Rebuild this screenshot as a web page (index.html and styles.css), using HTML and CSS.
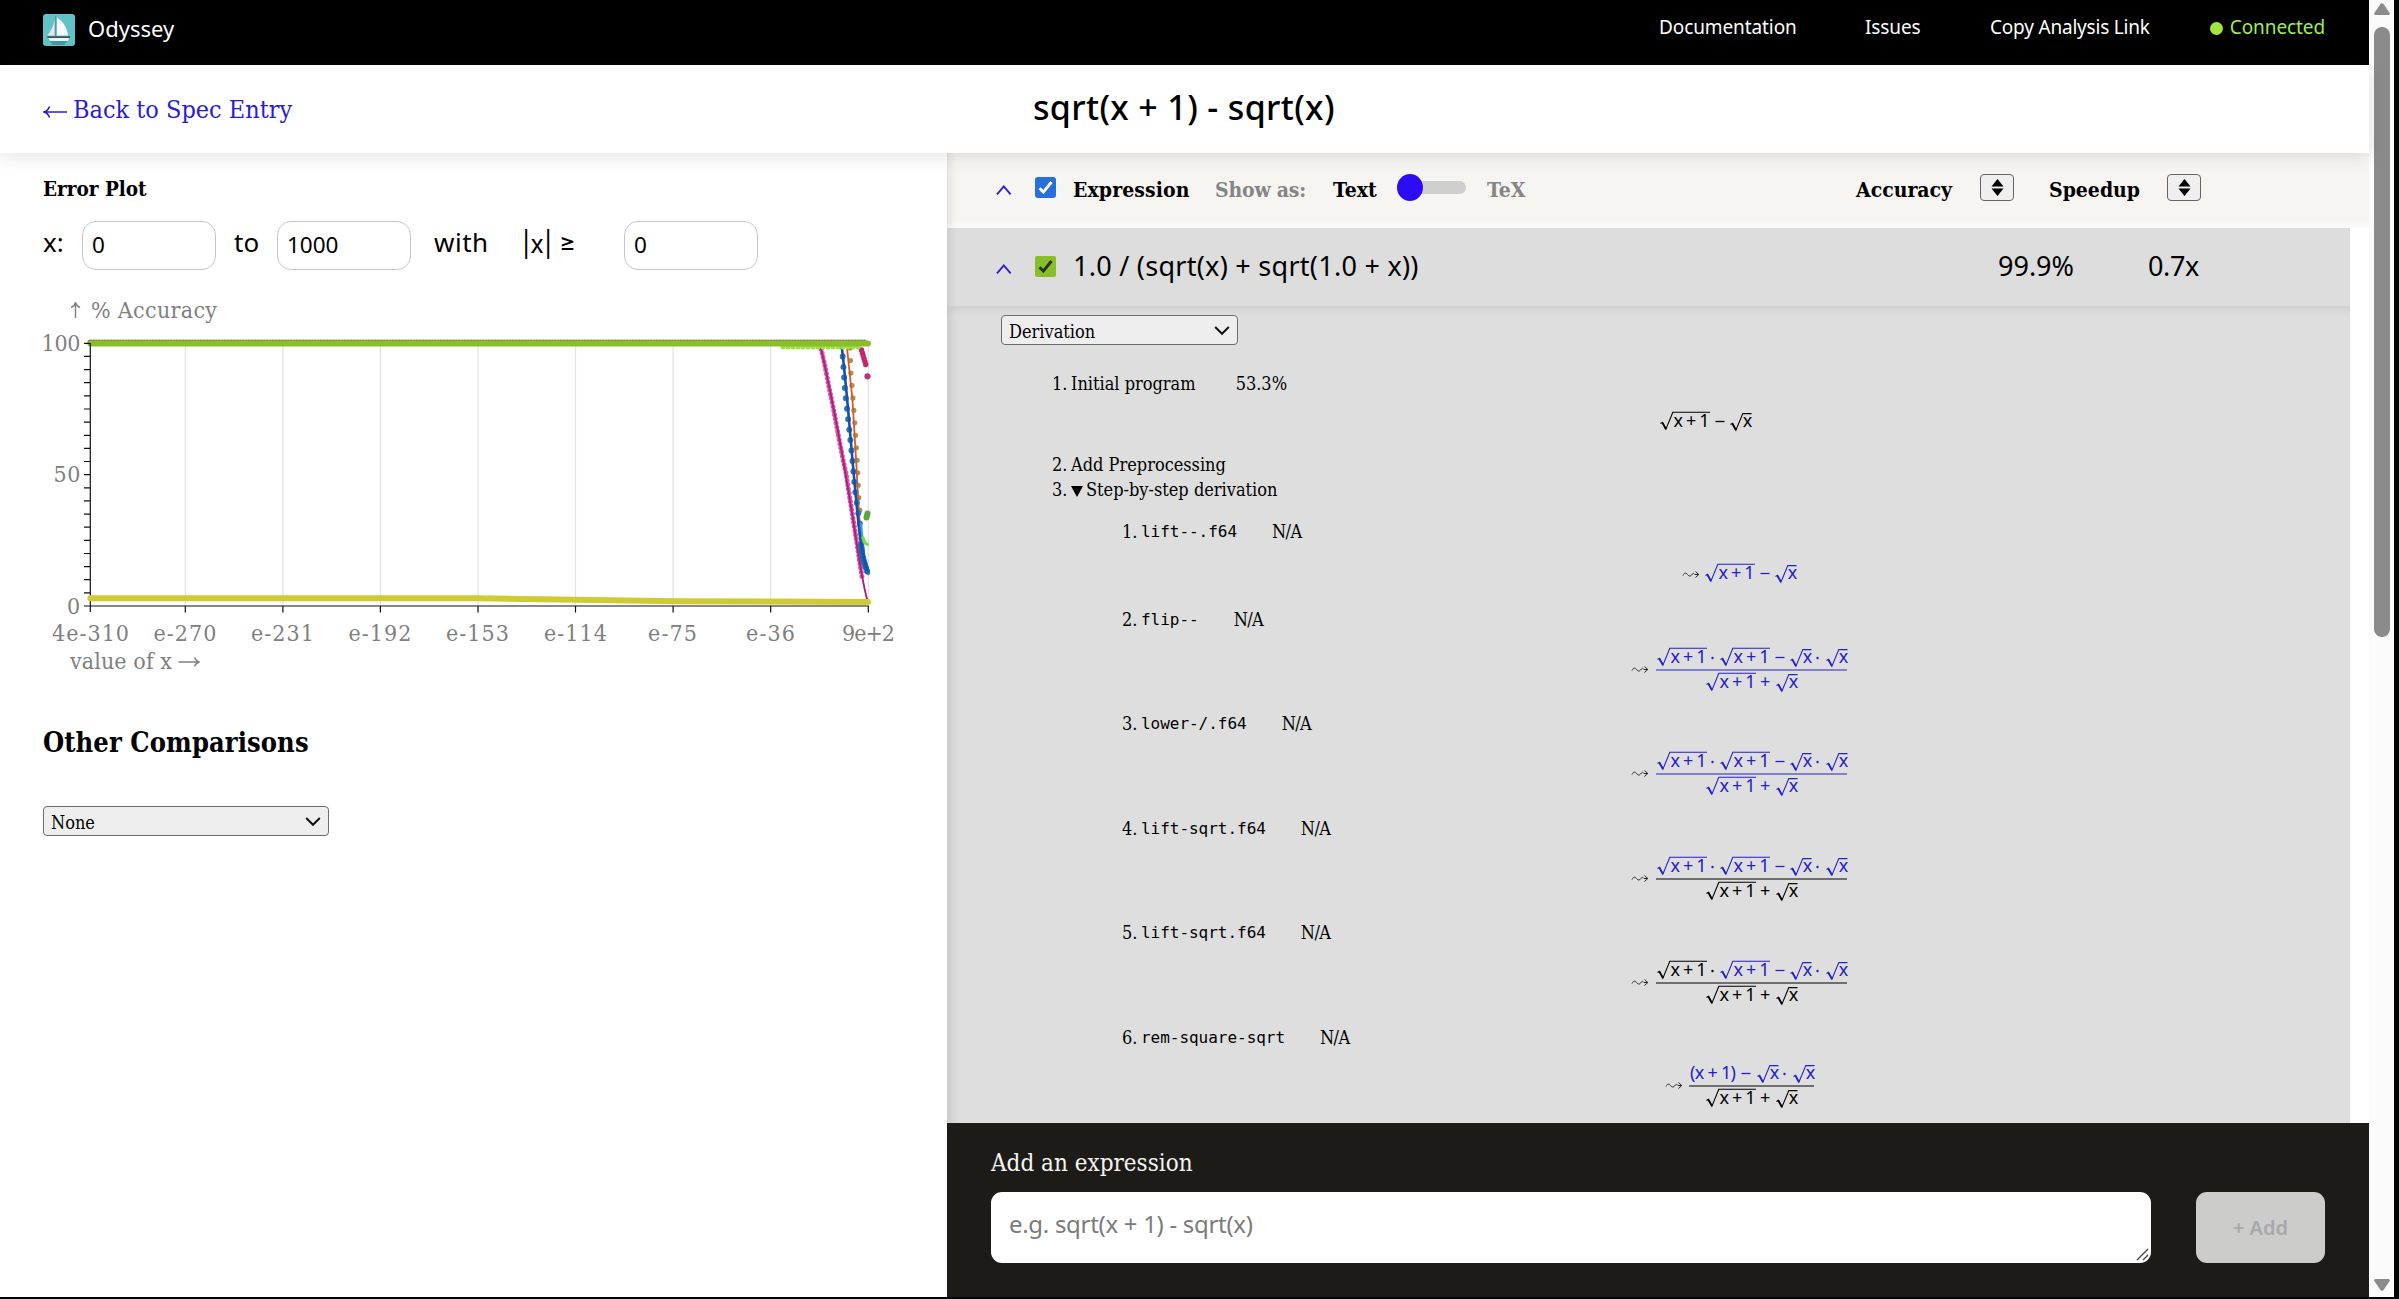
FILE: index.html
```html
<!DOCTYPE html>
<html lang="en">
<head>
<meta charset="utf-8">
<title>Odyssey</title>
<link rel="stylesheet" href="styles.css">
</head>
<body>
<svg class="defs" aria-hidden="true">
  <defs>
    <g id="root-sum">
      <path d="M.5 12.500l2-1.300 3.400 7L12.800 1.300H50" fill="none" stroke="currentColor" stroke-width="1.100"/>
      <path d="M2.300 11.500l3.600 6.500" fill="none" stroke="currentColor" stroke-width="1.800"/>
      <text x="13.500" y="16" textLength="36">x + 1</text>
    </g>
    <g id="root-x">
      <path d="M.5 13.500l2-1.300 3.400 7L12.800 2.600H21.500" fill="none" stroke="currentColor" stroke-width="1.100"/>
      <path d="M2.300 12.500l3.600 6.500" fill="none" stroke="currentColor" stroke-width="1.800"/>
      <text x="12.700" y="16">x</text>
    </g>
    <g id="leads">
      <path d="M0 6.500c1.500-3 3-3 4.500-1s3 2 4.500 0 2-1 3 0H15.500M12.500 2.500l3.300 3-3.300 3" fill="none" stroke="#222" stroke-width="1"/>
    </g>
    <g id="sum-of-roots">
      <use href="#root-sum"/>
      <text x="54" y="16">+</text>
      <use href="#root-x" x="70"/>
    </g>
    <g id="difference">
      <use href="#root-sum"/>
      <path d="M55.500 10.500h9" stroke="currentColor" stroke-width="1.300"/>
      <use href="#root-x" x="70"/>
    </g>
    <g id="product-tail">
      <use href="#root-sum"/>
      <path d="M55.500 10.500h9" stroke="currentColor" stroke-width="1.300"/>
      <use href="#root-x" x="70"/>
      <circle cx="97.500" cy="11" r="1.200" fill="currentColor"/>
      <use href="#root-x" x="106"/>
    </g>
  </defs>
</svg>
<div class="app">
  <header class="topbar">
    <svg class="logo" width="32" height="32" viewBox="0 0 32 32">
      <rect width="32" height="32" rx="3" fill="#62c3c6"/>
      <path d="M5 25h21l-5 6H10z" fill="#3d9aa5"/>
      <path d="M11.500 6v15.500H4.500C8 17 10.500 12 11.500 6z" fill="#e4e8ec"/>
      <path d="M14 3.500c6 4 10 10 11 18H14z" fill="#f8f9fa"/>
      <path d="M12.500 2v20" stroke="#7b8a90" stroke-width="1"/>
      <path d="M4 22.500h23l-2 4.500H7z" fill="#f3f1ee"/>
      <path d="M4 22.300h23v1.700H4.500z" fill="#384e5c"/>
    </svg>
    <span class="brand">Odyssey</span>
    <nav class="nav">
      <a class="nav-docs">Documentation</a>
      <a class="nav-issues">Issues</a>
      <a class="nav-copy">Copy Analysis Link</a>
      <span class="status"><i class="dot"></i><span>Connected</span></span>
    </nav>
  </header>
  <div class="titlebar">
    <a class="back"><svg width="26" height="14" viewBox="0 0 26 14"><path d="M1 7h23M6.500 1.500C5.500 4.500 3.500 6.300 1 7c2.500.7 4.500 2.500 5.500 5.500" fill="none" stroke="currentColor" stroke-width="1.500"/></svg><span>Back to Spec Entry</span></a>
    <h1>sqrt(x + 1) - sqrt(x)</h1>
  </div>
  <div class="columns">
    <section class="left">
      <h2 class="plot-title">Error Plot</h2>
      <div class="range">
        <span class="lab lab-x">x:</span><span class="field">0</span>
        <span class="lab lab-to">to</span><span class="field">1000</span>
        <span class="lab lab-with">with</span><span class="lab lab-abs">|x| ≥</span><span class="field">0</span>
      </div>
      <svg class="plot" width="947" height="400" viewBox="0 290 947 400">
        <g stroke="#e4e4e4" stroke-width="1.300"><path d="M185.300 343V606M282.900 343V606M380.400 343V606M478 343V606M575.500 343V606M673.100 343V606M770.700 343V606M868.300 343V606"/></g>
        <g fill="none" stroke-linecap="round">
          <path d="M820 345C825 363 827 378 830 392C835 415 840 447 846 473C850 500 855 530 862 577" stroke="#d457b0" stroke-width="5" stroke-dasharray="0 4.200"/>
          <path d="M821 349C826 370 829 385 834 411C840 440 845 470 850 501C856 535 860 573 867 599" stroke="#a82474" stroke-width="1.900"/>
          <path d="M850 348L851 374 853.500 405 855 426 857.500 466 859 504 861 519" stroke="#a5935c" stroke-width="5.200" stroke-dasharray="0 12.500"/>
          <path d="M847 348L852.500 400 856.500 467 859 515 864 556" stroke="#d95a1e" stroke-width="1.800"/>
          <path d="M842 346L845 391 849 427 852 456 855 490 860 525" stroke="#3576ae" stroke-width="6" stroke-dasharray="0 10.500"/>
          <path d="M860 525L863 555 868 573" stroke="#3f9fca" stroke-width="4.500"/>
          <path d="M861 545L863 559 867.500 572.500" stroke="#1f66ad" stroke-width="6" stroke-dasharray="0 3"/>
          <path d="M842 349C847 390 850 435 855 488S861 550 867 570" stroke="#164fae" stroke-width="2.600"/>
          <path d="M861.500 350L866.500 367" stroke="#c32768" stroke-width="5.500" stroke-dasharray="0 3"/>
          <path d="M867.500 376.300h.01" stroke="#bd3279" stroke-width="6.200"/>
          <path d="M867.500 513.500L866.500 517.500" stroke="#5ba53e" stroke-width="6"/>
          <path d="M863 538L865 543 867.500 544.500" stroke="#70df45" stroke-width="3.200"/>
          <path d="M90.300 342.300H867" stroke="#85764d" stroke-width="5.500" stroke-dasharray="0 3"/>
          <path d="M783 347H862" stroke="#a1e042" stroke-width="5" stroke-dasharray="0 5"/>
          <path d="M90.300 343.600H868" stroke="#8abf2c" stroke-width="6"/>
        </g>
        <g stroke="#111" stroke-width="1.200" fill="none">
          <path d="M90.300 343V612M84 606H868.500"/>
          <path d="M84 343.300h6M84 356.400h6M84 369.600h6M84 382.700h6M84 395.800h6M84 409h6M84 422.100h6M84 435.300h6M84 448.400h6M84 461.500h6M84 474.700h6M84 487.800h6M84 500.900h6M84 514.100h6M84 527.200h6M84 540.300h6M84 553.500h6M84 566.600h6M84 579.700h6M84 592.900h6"/>
          <path d="M185.300 606v6.500M282.900 606v6.500M380.400 606v6.500M478 606v6.500M575.500 606v6.500M673.100 606v6.500M770.700 606v6.500M868.300 606v6.500"/>
        </g>
        <path d="M90.300 598.200H478L680 601.300 868 602" fill="none" stroke="#cfcb35" stroke-width="6" stroke-linecap="round"/>
        <g class="axis">
          <path d="M75.500 318V303M71 307.500C73.500 306.500 75 305 75.500 302.500C76 305 77.500 306.500 80 307.500" fill="none" stroke="#808080" stroke-width="1.400"/>
          <text x="91" y="318" textLength="126">% Accuracy</text>
          <text x="41.500" y="351" textLength="39">100</text>
          <text x="53.500" y="482" textLength="27">50</text>
          <text x="67" y="613.500">0</text>
          <g>
            <text x="52" y="641" textLength="77">4e-310</text>
            <text x="153.500" y="641" textLength="63">e-270</text>
            <text x="251" y="641" textLength="63">e-231</text>
            <text x="348.500" y="641" textLength="63">e-192</text>
            <text x="446" y="641" textLength="63">e-153</text>
            <text x="544" y="641" textLength="63">e-114</text>
            <text x="648" y="641" textLength="49">e-75</text>
            <text x="746" y="641" textLength="49">e-36</text>
            <text x="842" y="641" textLength="53">9e+2</text>
          </g>
          <text x="70" y="668.500" textLength="102">value of x</text>
          <path d="M178.500 662H199M194.500 657.500C195.500 660 197 661.500 199.500 662C197 662.500 195.500 664 194.500 666.500" fill="none" stroke="#808080" stroke-width="1.300"/>
        </g>
      </svg>
      <h2 class="other">Other Comparisons</h2>
      <div class="select select-none"><span>None</span><svg width="16" height="9" viewBox="0 0 16 9"><path d="M1.200 1l6.800 6.800L14.800 1" fill="none" stroke="#111" stroke-width="2"/></svg></div>
    </section>
    <section class="right">
      <div class="listhead">
        <svg class="caret" width="16" height="10" viewBox="0 0 16 10"><path d="M1 9.300L7.800 1.500l6.800 7.800" fill="none" stroke="#2f1fd0" stroke-width="1.900"/></svg>
        <svg class="check" width="21" height="21" viewBox="0 0 21 21"><rect width="21" height="21" rx="3" fill="#266fdd"/><path d="M4.500 11.300l3.800 3.800L16.500 5" fill="none" stroke="#fff" stroke-width="2.900"/></svg>
        <b class="h-expr">Expression</b>
        <b class="h-show">Show as:</b>
        <b class="h-text">Text</b>
        <span class="toggle"><i></i></span>
        <b class="h-tex">TeX</b>
        <b class="h-acc">Accuracy</b>
        <span class="sort"><svg width="13" height="17" viewBox="0 0 13 17"><path d="M6.500 0L12.500 7.500H.5zM6.500 17L.5 9.500h12z"/></svg></span>
        <b class="h-speed">Speedup</b>
        <span class="sort"><svg width="13" height="17" viewBox="0 0 13 17"><path d="M6.500 0L12.500 7.500H.5zM6.500 17L.5 9.500h12z"/></svg></span>
      </div>
      <div class="row">
        <svg class="caret" width="16" height="10" viewBox="0 0 16 10"><path d="M1 9.300L7.800 1.500l6.800 7.800" fill="none" stroke="#2f1fd0" stroke-width="1.900"/></svg>
        <svg class="check" width="21" height="21" viewBox="0 0 21 21"><rect width="21" height="21" rx="2" fill="#89be2b"/><path d="M4.500 11.300l3.800 3.800L16.500 5" fill="none" stroke="#26331a" stroke-width="2.900"/></svg>
        <span class="expr">1.0 / (sqrt(x) + sqrt(1.0 + x))</span>
        <span class="acc">99.9%</span>
        <span class="speed">0.7x</span>
      </div>
      <div class="details">
        <div class="select select-derivation"><span>Derivation</span><svg width="16" height="9" viewBox="0 0 16 9"><path d="M1.200 1l6.800 6.800L14.800 1" fill="none" stroke="#111" stroke-width="2"/></svg></div>
        <div class="steps">
          <div class="step first">
            <div class="line"><span class="num">1.</span><span class="name">Initial program</span><span class="val">53.3%</span></div>
            <svg class="math" width="92" height="24" viewBox="0 0 92 24"><use href="#difference"/></svg>
          </div>
          <div class="line"><span class="num">2.</span><span>Add Preprocessing</span></div>
          <div class="line"><span class="num">3.</span><svg class="tri" width="12" height="11" viewBox="0 0 12 11"><path d="M0 0h12L6 11z"/></svg><span>Step-by-step derivation</span></div>
          <div class="substeps">
            <div class="step s1">
              <div class="line"><span class="num">1.</span><code>lift--.f64</code><span class="na">N/A</span></div>
              <svg class="math" width="114" height="24" viewBox="0 0 114 24"><use href="#leads" y="6"/><use href="#difference" x="22" class="blue"/></svg>
            </div>
            <div class="step">
              <div class="line"><span class="num">2.</span><code>flip--</code><span class="na">N/A</span></div>
              <svg class="math" width="216" height="46" viewBox="0 0 216 46"><use href="#leads" y="17"/><g class="blue"><use href="#root-sum" x="25"/><circle cx="80.500" cy="11" r="1.200" fill="currentColor"/><use href="#product-tail" x="88"/><path d="M24 23h191" stroke="currentColor" stroke-width="1.200"/><use href="#sum-of-roots" x="74" y="25"/></g></svg>
            </div>
            <div class="step">
              <div class="line"><span class="num">3.</span><code>lower-/.f64</code><span class="na">N/A</span></div>
              <svg class="math" width="216" height="46" viewBox="0 0 216 46"><use href="#leads" y="17"/><g class="blue"><use href="#root-sum" x="25"/><circle cx="80.500" cy="11" r="1.200" fill="currentColor"/><use href="#product-tail" x="88"/><path d="M24 23h191" stroke="currentColor" stroke-width="1.200"/><use href="#sum-of-roots" x="74" y="25"/></g></svg>
            </div>
            <div class="step">
              <div class="line"><span class="num">4.</span><code>lift-sqrt.f64</code><span class="na">N/A</span></div>
              <svg class="math" width="216" height="46" viewBox="0 0 216 46"><use href="#leads" y="17"/><g class="blue"><use href="#root-sum" x="25"/><circle cx="80.500" cy="11" r="1.200" fill="currentColor"/><use href="#product-tail" x="88"/></g><path d="M24 23h191" stroke="currentColor" stroke-width="1.200"/><use href="#sum-of-roots" x="74" y="25"/></svg>
            </div>
            <div class="step">
              <div class="line"><span class="num">5.</span><code>lift-sqrt.f64</code><span class="na">N/A</span></div>
              <svg class="math" width="216" height="46" viewBox="0 0 216 46"><use href="#leads" y="17"/><use href="#root-sum" x="25"/><circle cx="80.500" cy="11" r="1.200" fill="currentColor"/><use href="#product-tail" x="88" class="blue"/><path d="M24 23h191" stroke="currentColor" stroke-width="1.200"/><use href="#sum-of-roots" x="74" y="25"/></svg>
            </div>
            <div class="step s6">
              <div class="line"><span class="num">6.</span><code>rem-square-sqrt</code><span class="na">N/A</span></div>
              <svg class="math" width="149" height="46" viewBox="0 0 149 46"><use href="#leads" y="17"/><g class="blue"><text x="24" y="16" textLength="46">(x + 1)</text><path d="M75.500 10.500h9" stroke="currentColor" stroke-width="1.300"/><use href="#root-x" x="91"/><circle cx="118.500" cy="11" r="1.200" fill="currentColor"/><use href="#root-x" x="127"/></g><path d="M23 23h125" stroke="currentColor" stroke-width="1.200"/><use href="#sum-of-roots" x="40" y="25"/></svg>
            </div>
          </div>
        </div>
      </div>
      <footer class="adder">
        <label>Add an expression</label>
        <div class="adder-row">
          <div class="textarea"><span>e.g. sqrt(x + 1) - sqrt(x)</span><svg width="13" height="13" viewBox="0 0 13 13"><path d="M1 12L12 1M7 12l5-5" stroke="#444" stroke-width="1.400"/></svg></div>
          <div class="add">+ Add</div>
        </div>
      </footer>
    </section>
  </div>
</div>
<div class="scrollbar">
  <svg width="16" height="12" viewBox="0 0 16 12"><path d="M8 0l1.500 1L16 10.500 15 12H1L0 10.500 6.500 1z" fill="#8b8b8b"/></svg>
  <i class="thumb"></i>
  <svg width="16" height="12" viewBox="0 0 16 12"><path d="M8 12l1.500-1L16 1.500 15 0H1L0 1.500 6.500 11z" fill="#8b8b8b"/></svg>
</div>
</body>
</html>
```
FILE: styles.css
```css
* { box-sizing: border-box; }
body {
  margin: 0;
  width: 2399px;
  height: 1299px;
  overflow: hidden;
  display: flex;
  background: #000;
  color: #000;
  font-family: "DejaVu Serif Condensed", "DejaVu Serif", serif;
  white-space: nowrap;
}
svg { display: block; flex: none; }
.defs { position: absolute; width: 0; height: 0; }
.app { width: 2369px; height: 1297px; background: #fff; display: flex; flex-direction: column; }

.topbar {
  height: 65px;
  background: #000;
  color: #fff;
  font-family: "Noto Sans", sans-serif;
  display: flex;
  align-items: flex-start;
  padding-left: 43px;
  line-height: 30px;
}
.logo { margin-top: 14px; }
.brand { margin: 13px 0 0 13px; font-size: 22px; }
.nav { margin: 12px 44px 0 auto; display: flex; font-size: 19px; letter-spacing: -.1px; }
.nav-docs { width: 206px; }
.nav-issues { width: 125px; }
.nav-copy { width: 220px; letter-spacing: -.2px; }
.status { display: flex; align-items: center; gap: 7px; width: 115px; color: #9fec55; }
.dot { width: 13px; height: 13px; border-radius: 50%; background: #a2e43f; margin-top: 3px; }

.titlebar {
  height: 88px;
  background: #fff;
  display: flex;
  align-items: flex-start;
  line-height: 40px;
  padding-left: 43px;
  position: relative;
  z-index: 2;
  box-shadow: 0 4px 16px rgba(40, 40, 50, .12);
}
.back { width: 990px; height: 40px; margin-top: 25px; display: flex; align-items: center; gap: 4px; color: #2a1cd2; font-size: 25px; }
.back svg { margin-top: 3px; }
h1 { margin: 22px 0 0; font: 500 34px/40px "Noto Sans", sans-serif; letter-spacing: .35px; }

.columns { display: flex; height: 1144px; }
.left { width: 947px; }
.right { width: 1422px; display: flex; flex-direction: column; }

.plot-title { margin: 20px 0 0 43px; font-size: 20.5px; line-height: 32px; }
.range {
  margin: 16px 0 0 43px;
  height: 49px;
  display: flex;
  align-items: center;
  font-family: "Noto Sans", sans-serif;
  font-size: 26px;
}
.field {
  width: 134px;
  height: 49px;
  border: 1px solid #c6c6c6;
  border-radius: 14px;
  padding-left: 9px;
  font-size: 22.5px;
  line-height: 45px;
}
.lab { line-height: 36px; margin-top: -7px; }
.lab-x { width: 39px; }
.lab-to { width: 61px; padding-left: 18px; }
.lab-with { width: 111px; padding-left: 23px; letter-spacing: .5px; }
.lab-abs { width: 102px; font-family: Inter, sans-serif; font-size: 25px; margin-top: -3px; }
.plot { margin-top: 20px; }
.axis { fill: #808080; font-size: 23px; }
.other { margin: 33px 0 0 43px; font-size: 27px; line-height: 40px; letter-spacing: .1px; }
.select {
  height: 30px;
  display: flex;
  align-items: center;
  justify-content: space-between;
  background: #efeeee;
  border: 1px solid #6c6c6c;
  border-radius: 4px;
  padding: 0 7px;
  font-size: 18px;
}
.select-none { width: 286px; margin: 43px 0 0 43px; }
.select span { padding-top: 2px; }

.listhead {
  height: 75px;
  background: linear-gradient(#f7f5f2 68px, #fdfcfb);
  display: flex;
  padding: 20px 0 0 48px;
  font-size: 21px;
  line-height: 32px;
  box-shadow: inset 10px 0 12px -10px rgba(0, 0, 0, .15);
}
.caret { margin: 12px 23px 0 1px; }
.check { margin-top: 4px; }
.listhead .check { margin-right: 17px; }
.listhead b { margin-top: 1px; }
.h-expr { width: 142px; letter-spacing: .1px; }
.h-show { width: 118px; color: #858585; letter-spacing: -.2px; }
.h-text { width: 64px; }
.toggle { width: 69px; height: 13px; margin-top: 8px; border-radius: 7px; background: #cfcfcf; }
.toggle i { display: block; width: 26px; height: 27px; border-radius: 50%; background: #2c0cf5; margin-top: -7px; position: relative; }
.h-tex { width: 390px; padding-left: 21px; color: #858585; }
.h-acc { width: 124px; }
.sort {
  width: 34px;
  height: 27px;
  margin: 1px 0 0;
  border: 1px solid #666;
  border-radius: 4px;
  background: #efefef;
  display: grid;
  place-items: center;
}
.h-speed { width: 118px; margin-left: 35px; }
.row {
  width: 1403px;
  height: 78px;
  background: #ddd;
  display: flex;
  padding: 21px 0 0 48px;
  font: 27px/34px "Noto Sans", sans-serif;
  box-shadow: inset 10px 0 12px -10px rgba(0, 0, 0, .15);
}
.row .caret { margin-top: 15px; }
.row .check { margin-top: 7px; }
.expr { width: 925px; margin-left: 17px; letter-spacing: .27px; }
.acc { width: 150px; }
.speed { letter-spacing: -.4px; }

.details {
  width: 1403px;
  height: 817px;
  overflow: hidden;
  background: #dedede;
  box-shadow: inset 10px 8px 12px -8px rgba(0, 0, 0, .13);
  padding: 9px 10px 0 54px;
}
.select-derivation { width: 237px; }
.steps { margin: 26px 0 0 51px; font-size: 18px; line-height: 25px; }
.line { display: flex; height: 25px; }
.num { width: 19px; }
.val { margin-left: 40px; }
.tri { margin: 9px 3px 0 0; }
.step { height: 104.400px; }
.first { height: 81px; padding-left: 19px; }
.first .line { margin-left: -19px; }
.math { margin: 15px auto 0; overflow: visible; font: 18px "Noto Sans", sans-serif; fill: currentColor; }
.first .math { margin-top: 15px; }
.blue { color: #2520c8; fill: #2520c8; }
.substeps { margin: 17px 0 0 70px; }
.s1 { height: 88px; }
.substeps .math { position: relative; left: 9px; }
.s1 .math { margin-top: 19px; }
.s6 .math { margin-top: 13px; }
code { font: 16px/25px "DejaVu Sans Mono", monospace; letter-spacing: -.03px; }
.na { margin-left: 35px; letter-spacing: -.6px; }

.adder {
  height: 174px;
  background: #1c1b17;
  color: #f4f4f2;
  padding: 24px 44px 0;
  font-size: 24px;
}
.adder label { display: block; line-height: 32px; }
.adder-row { margin-top: 13px; display: flex; gap: 45px; font-family: "Noto Sans", sans-serif; }
.textarea {
  width: 1160px;
  height: 71px;
  background: #fff;
  border-radius: 11px;
  color: #7b7b7b;
  padding: 14px 2px 2px 18px;
  display: flex;
  justify-content: space-between;
  font-size: 24px;
  line-height: 36px;
  letter-spacing: -.3px;
}
.textarea svg { align-self: flex-end; }
.add {
  width: 129px;
  height: 71px;
  border-radius: 11px;
  background: #cccccb;
  color: #a7a9ac;
  font-size: 20px;
  font-weight: 600;
  line-height: 71px;
  text-align: center;
}

.scrollbar {
  width: 25px;
  height: 1297px;
  background: #fbfbfb;
  display: flex;
  flex-direction: column;
  align-items: center;
  padding: 3px 0 6px;
}
.thumb { width: 16px; height: 610px; margin: 12px 0 auto; border-radius: 8px; background: #8b8b8b; }
```
